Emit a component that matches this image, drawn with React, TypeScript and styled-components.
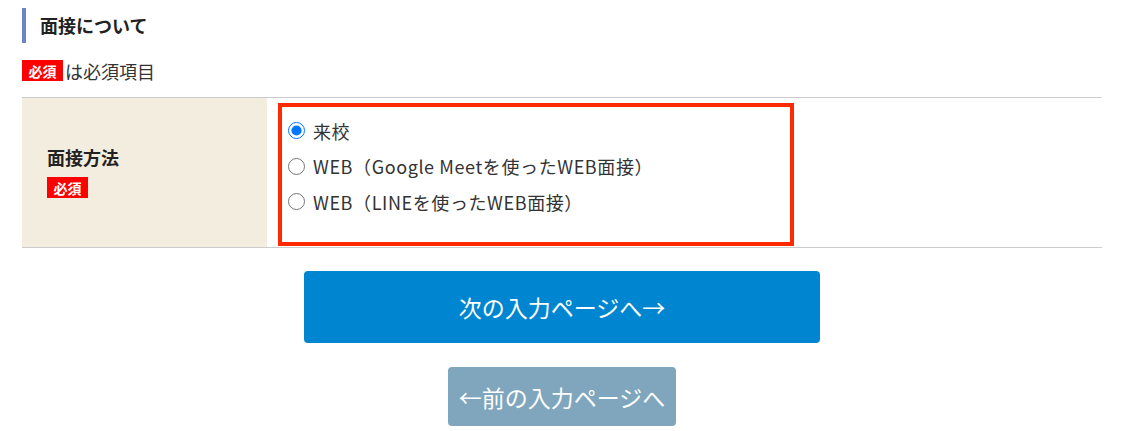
import React from 'react';
import styled, { createGlobalStyle } from 'styled-components';

const GlobalStyle = createGlobalStyle`
  body {
    margin: 0;
    background: #fff;
    font-family: "Noto Sans CJK JP", "Noto Sans", "Liberation Sans", sans-serif;
    color: #333;
  }
`;

const Page = styled.div`
  width: 1080px;
  padding: 8px 0 0 22px;
`;

const Heading = styled.h2`
  margin: 0;
  height: 35px;
  line-height: 34px;
  border-left: 4px solid #6a85c8;
  padding-left: 14px;
  font-size: 18px;
  font-weight: bold;
  color: #222;
`;

const Note = styled.div`
  margin-top: 17px;
  display: flex;
  align-items: center;
  gap: 2px;
  height: 21px;
  font-size: 18px;
`;

const Badge = styled.span`
  display: inline-flex;
  align-items: center;
  justify-content: center;
  height: 21px;
  width: 41px;
  background: #ff0000;
  color: #fff;
  font-size: 14px;
  font-weight: bold;
  line-height: 1;
`;

const Table = styled.div`
  margin-top: 16px;
  display: grid;
  grid-template-columns: 245px 1fr;
  border-top: 1px solid #ccc;
  border-bottom: 1px solid #ccc;
`;

const LabelCell = styled.div`
  background: #f3ede0;
  height: 149px;
  box-sizing: border-box;
  padding: 0 0 3px 25px;
  display: flex;
  flex-direction: column;
  justify-content: center;
  align-items: flex-start;
  gap: 7px;
`;

const Label = styled.div`
  font-size: 18px;
  font-weight: bold;
  color: #222;
  line-height: 26px;
`;

const ValueCell = styled.div`
  padding: 5px 0 0 11px;
`;

const Options = styled.div`
  width: 508px;
  height: 129px;
  border: 4px solid #ff2a00;
  padding-top: 6px;
  box-sizing: content-box;
`;

const Option = styled.label`
  display: flex;
  align-items: center;
  height: 35.5px;
  padding-left: 6px;
  font-size: 18px;
  letter-spacing: 0.6px;
  color: #333;
  gap: 8px;
`;

const Radio = styled.input`
  margin: 0;
  width: 17px;
  height: 17px;
  accent-color: #0075ff;
`;

const Buttons = styled.div`
  display: flex;
  flex-direction: column;
  align-items: center;
  gap: 24px;
  margin-top: 23px;
`;

const Button = styled.button<{ $primary?: boolean }>`
  border: none;
  border-radius: 4px;
  font-family: inherit;
  color: #fff;
  font-size: 23px;
  background: ${p => (p.$primary ? '#0086d1' : '#7fa6bc')};
  width: ${p => (p.$primary ? '516px' : '228px')};
  height: ${p => (p.$primary ? '72px' : '59px')};
  padding: 0;
  cursor: pointer;
`;

const options = [
  '来校',
  'WEB（Google Meetを使ったWEB面接）',
  'WEB（LINEを使ったWEB面接）',
];

function App() {
  return (
    <Page>
      <GlobalStyle />
      <Heading>面接について</Heading>
      <Note>
        <Badge>必須</Badge>は必須項目
      </Note>
      <Table>
        <LabelCell>
          <Label>面接方法</Label>
          <Badge>必須</Badge>
        </LabelCell>
        <ValueCell>
          <Options>
            {options.map((o, i) => (
              <Option key={o}>
                <Radio type="radio" name="method" defaultChecked={i === 0} />
                {o}
              </Option>
            ))}
          </Options>
        </ValueCell>
      </Table>
      <Buttons>
        <Button $primary>次の入力ページへ→</Button>
        <Button>←前の入力ページへ</Button>
      </Buttons>
    </Page>
  );
}

export default App;
